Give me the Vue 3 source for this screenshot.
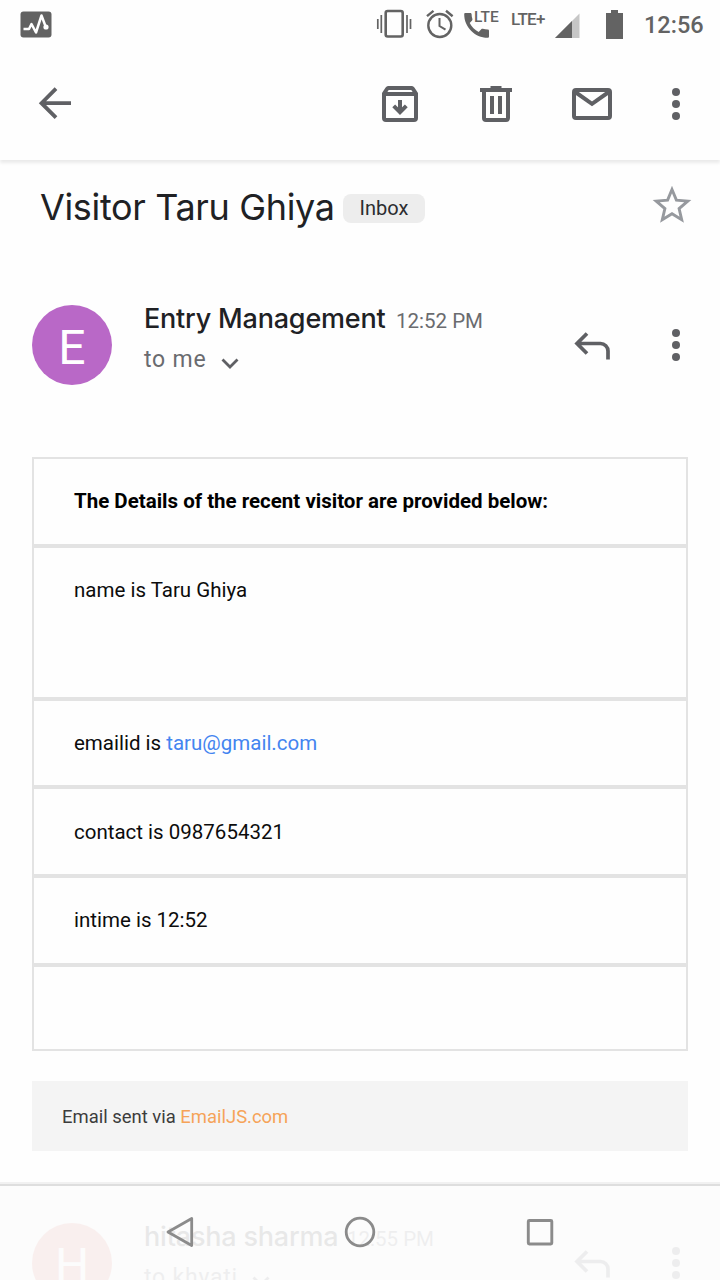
<script setup>
const rows = [
  { id: 'title', text: 'The Details of the recent visitor are provided below:', kind: 'bold' },
  { id: 'name', text: 'name is Taru Ghiya', kind: 'tall' },
  { id: 'email', text: 'emailid is ', link: 'taru@gmail.com', kind: 'email' },
  { id: 'contact', text: 'contact is 0987654321', kind: 'contact' },
  { id: 'intime', text: 'intime is 12:52', kind: 'intime' },
  { id: 'empty', text: '', kind: 'last' },
]
</script>

<template>
  <div class="screen">
    <header class="status">
      <svg class="pulse" width="32" height="28" viewBox="0 0 32 28">
        <rect x="0.5" y="0.5" width="31" height="26" rx="3" fill="#626262" />
        <path d="M3.500 18H9l2.500-5 4.500 8.500L21.500 4.500 25.800 16" fill="none" stroke="#fff" stroke-width="2.500" stroke-linejoin="round" />
        <circle cx="26" cy="16" r="2.600" fill="#fff" />
      </svg>
      <svg class="vibrate" width="36" height="30" viewBox="0 0 36 30">
        <rect x="9.700" y="2" width="17" height="25.500" rx="2" fill="none" stroke="#636363" stroke-width="2.600" />
        <path d="M1.800 10v10M5.300 6v18M31 6v18M34.500 10v10" stroke="#636363" stroke-width="1.700" fill="none" />
      </svg>
      <svg class="alarm" width="28" height="30" viewBox="0 0 28 30">
        <g fill="none" stroke="#636363" stroke-width="2.400">
          <circle cx="13.800" cy="16.500" r="11.500" />
          <path d="M1 7.200L7.500 1.800M20 1.800L26.600 7.200" />
          <path d="M13.500 9v8l6 3.700" stroke-width="2" />
        </g>
      </svg>
      <svg class="call" width="36" height="30" viewBox="0 0 36 30">
        <path d="M1.400 4H6.300c.8 0 1.300.6 1.300 1.300 0 1.700.3 3.200.8 4.700.1.500 0 1-.3 1.400L5.700 14c2 4 5.200 7 9 9l2.800-2.900c.4-.4.9-.5 1.400-.3 1.500.5 3 .8 4.800.8.700 0 1.300.5 1.300 1.300v5.500c0 .8-.6 1.300-1.300 1.300C10.800 28.700.2 18 .2 5.200.2 4.500.7 4 1.400 4z" fill="#636363" />
      </svg>
      <span class="lte">LTE</span>
      <span class="lteplus">LTE+</span>
      <svg class="signal" width="25" height="25" viewBox="0 0 25 25">
        <path d="M0 25L24.500.5V25z" fill="#c6c6c6" />
        <path d="M0 25L17 8V25z" fill="#636363" />
      </svg>
      <svg class="battery" width="17" height="29" viewBox="0 0 17 29">
        <path d="M5 0h7v3h5v26H0V3h5z" fill="#636363" />
      </svg>
      <span class="clock">12:56</span>
    </header>

    <nav class="toolbar">
      <svg class="back" width="34" height="34" viewBox="0 0 34 34">
        <path d="M33 17.200H4M18 2.700L3.500 17.200 18 31.700" fill="none" stroke="#5f6064" stroke-width="3.800" />
      </svg>
      <svg class="archive" width="36" height="36" viewBox="0 0 36 36">
        <path d="M2 7.500V32a2 2 0 0 0 2 2h28a2 2 0 0 0 2-2V7.500L30.800 2.700a2 2 0 0 0-1.500-.7H6.700a2 2 0 0 0-1.500.7zM3 8h30" fill="none" stroke="#5f6064" stroke-width="4" />
        <path d="M18 14v11M11.700 19.800l6.300 6.300 6.300-6.300" fill="none" stroke="#5f6064" stroke-width="4" />
      </svg>
      <svg class="trash" width="32" height="36" viewBox="0 0 32 36">
        <path d="M10.500 0h11v2H32v4H0V2h10.500z" fill="#5f6064" />
        <path d="M4 5v27a2 2 0 0 0 2 2h20a2 2 0 0 0 2-2V5M12 10v18M20 10v18" fill="none" stroke="#5f6064" stroke-width="4" />
      </svg>
      <svg class="mail" width="40" height="32" viewBox="0 0 40 32">
        <rect x="2" y="2" width="36" height="28" rx="2" fill="none" stroke="#5f6064" stroke-width="4" />
        <path d="M2.500 3.500L20 15.800 37.500 3.500" fill="none" stroke="#5f6064" stroke-width="4" />
      </svg>
      <svg class="more" width="8" height="32" viewBox="0 0 8 32">
        <g fill="#5f6064"><circle cx="4" cy="4" r="4" /><circle cx="4" cy="16" r="4" /><circle cx="4" cy="28" r="4" /></g>
      </svg>
    </nav>

    <section class="subject">
      <h1>Visitor Taru Ghiya</h1>
      <span class="chip">Inbox</span>
      <svg class="star" width="40" height="38" viewBox="0 0 40 38">
        <path d="M20 3.500L24.400 14.100 35.800 15.100 27.100 22.600 29.700 33.700 20 27.800 10.300 33.700 12.900 22.600 4.200 15.100 15.600 14.100z" fill="none" stroke="#96999e" stroke-width="2.900" />
      </svg>
    </section>

    <section class="message">
      <div class="avatar">E</div>
      <div class="who">
        <div class="line"><strong>Entry Management</strong><time>12:52 PM</time></div>
        <div class="to">
          <span>to me</span>
          <svg width="18" height="12" viewBox="0 0 18 12"><path d="M1.500 1.500L9 9l7.500-7.500" fill="none" stroke="#5f6064" stroke-width="2.800" /></svg>
        </div>
      </div>
      <svg class="reply" width="36" height="28" viewBox="0 0 36 28">
        <path d="M34 27.500V19a7.500 7.500 0 0 0-7.500-7.500H3M13 1.500L3 11.500 13 21.500" fill="none" stroke="#5f6064" stroke-width="3.700" />
      </svg>
      <svg class="dots" width="8" height="32" viewBox="0 0 8 32">
        <g fill="#5f6064"><circle cx="4" cy="4" r="4" /><circle cx="4" cy="16" r="4" /><circle cx="4" cy="28" r="4" /></g>
      </svg>
    </section>

    <main class="table">
      <div v-for="r in rows" :key="r.id" class="cell" :class="r.kind">{{ r.text }}<a v-if="r.link">{{ r.link }}</a></div>
    </main>

    <div class="sent">Email sent via&nbsp;<a>EmailJS.com</a></div>

    <footer class="bottom">
      <section class="message faded">
        <div class="avatar red">H</div>
        <div class="who">
          <div class="line"><strong class="n2">hitasha sharma</strong><time>12:55 PM</time></div>
          <div class="to">
            <span>to khyati</span>
            <svg width="18" height="12" viewBox="0 0 18 12"><path d="M1.500 1.500L9 9l7.500-7.500" fill="none" stroke="#5f6064" stroke-width="2.800" /></svg>
          </div>
        </div>
        <svg class="reply" width="36" height="28" viewBox="0 0 36 28">
          <path d="M34 27.500V19a7.500 7.500 0 0 0-7.500-7.500H3M13 1.500L3 11.500 13 21.500" fill="none" stroke="#5f6064" stroke-width="3.700" />
        </svg>
        <svg class="dots" width="8" height="32" viewBox="0 0 8 32">
          <g fill="#5f6064"><circle cx="4" cy="4" r="4" /><circle cx="4" cy="16" r="4" /><circle cx="4" cy="28" r="4" /></g>
        </svg>
      </section>
      <div class="keys">
        <svg class="kback" width="28" height="32" viewBox="0 0 28 32"><path d="M25.700 2.500v27L2 16z" fill="none" stroke="#8b8b8b" stroke-width="2.800" stroke-linejoin="round" /></svg>
        <svg class="khome" width="32" height="32" viewBox="0 0 32 32"><circle cx="16" cy="16" r="13.800" fill="none" stroke="#8b8b8b" stroke-width="2.800" /></svg>
        <svg class="krecent" width="28" height="28" viewBox="0 0 28 28"><rect x="2.300" y="2.500" width="23.500" height="23.500" rx="1" fill="none" stroke="#8b8b8b" stroke-width="2.900" /></svg>
      </div>
    </footer>
  </div>
</template>

<style>
html, body { background: #fefefe; overflow: hidden; }
</style>

<style scoped>
* { box-sizing: border-box; }
.screen {
  width: 720px;
  height: 1280px;
  overflow: hidden;
  background: #fefefe;
  font-family: Roboto, "Liberation Sans", sans-serif;
  display: flex;
  flex-direction: column;
}
svg { display: block; flex: none; }
.status, .toolbar, .subject, .message, .keys { display: flex; align-items: flex-start; white-space: nowrap; flex: none; }
.status { height: 48px; padding-left: 20px; }
.pulse { margin-top: 11px; }
.vibrate { margin: 9px 0 0 324px; }
.alarm { margin: 9px 0 0 14px; }
.call { margin: 9px 0 0 10px; }
.lte { width: 26px; margin: 7px 0 0 -26px; font-size: 15.500px; line-height: 20px; font-weight: 500; letter-spacing: 0; color: #636363; }
.lteplus { width: 37px; margin: 9px 0 0 11px; font-size: 17px; line-height: 20px; font-weight: 500; letter-spacing: -0.7px; color: #636363; }
.signal { margin: 13px 0 0 7px; }
.battery { margin: 10px 0 0 26px; }
.clock { margin: 11px 0 0 21px; font-size: 23.500px; line-height: 28px; font-weight: 500; color: #636363; }

.toolbar { height: 112px; padding-left: 38px; box-shadow: 0 3px 3px rgba(0, 0, 0, 0.08); }
.back { margin-top: 38px; }
.archive { margin: 38px 0 0 310px; }
.trash { margin: 38px 0 0 62px; }
.mail { margin: 40px 0 0 60px; }
.more { margin: 40px 0 0 60px; }

.subject { height: 145px; padding-left: 40px; }
h1 { width: 303px; margin: 24px 0 0; font: 400 36px/46px Inter, sans-serif; letter-spacing: -0.35px; color: #202124; }
.chip {
  width: 82px; height: 29px; margin-top: 34px; border-radius: 8px; background: #ededed;
  font-size: 20px; line-height: 29px; color: #2c2d30; text-align: center;
}
.star { margin: 26px 0 0 227px; }

.message { height: 152px; padding-left: 32px; }
.avatar {
  width: 80px; height: 80px; border-radius: 50%; background: #b968c7; color: #fff;
  font: 400 48px/86px Roboto, sans-serif; text-align: center; flex: none;
}
.avatar.red { background: #e57368; }
.who { width: 430px; margin-left: 32px; }
.line { display: flex; align-items: baseline; height: 41px; line-height: 28px; }
strong { width: 252px; font: 500 27px/28px Inter, sans-serif; letter-spacing: -0.2px; color: #202124; }
time { font-size: 20.500px; color: #6a6b6f; }
.to { display: flex; height: 28px; font-size: 23px; line-height: 28px; letter-spacing: 0.8px; color: #6a6b6f; }
.to svg { margin: 12px 0 0 14px; }
.reply { margin-top: 27px; }
.dots { margin: 24px 0 0 62px; }

.table { margin: 0 32px; width: 656px; flex: none; border-top: 2px solid #e3e3e3; border-left: 2px solid #e3e3e3; border-right: 2px solid #e3e3e3; }
.cell { height: 89px; padding: 30px 40px 0; border-bottom: 4px solid #e3e3e3; font-size: 20.500px; line-height: 24px; color: #0c0c0c; white-space: pre; }
.bold { font-weight: 700; color: #000; }
.tall { height: 153px; }
.email { height: 88px; }
.contact { padding-top: 31px; }
.last { height: 84px; border-bottom-width: 2px; }
.cell a { color: #4384f0; }

.sent { flex: none; display: flex; width: 656px; height: 70px; margin: 30px 32px 0; padding-left: 30px; background: #f4f4f4; font-size: 18.450px; line-height: 72px; color: #3c3c3c; }
.sent a { color: #f6a358; }

.bottom { position: relative; flex: none; height: 98px; margin-top: 31px; border-top: 2px solid #f1f1f1; overflow: hidden; background: #fcfcfc; box-shadow: inset 0 2px #dedede; }
.faded { padding-top: 39px; opacity: 0.085; }
.n2 { width: 203px; }
.keys { position: absolute; inset: 0; padding-left: 166px; }
.kback { margin-top: 32px; }
.khome { margin: 32px 0 0 150px; }
.krecent { margin: 34px 0 0 150px; }
</style>
